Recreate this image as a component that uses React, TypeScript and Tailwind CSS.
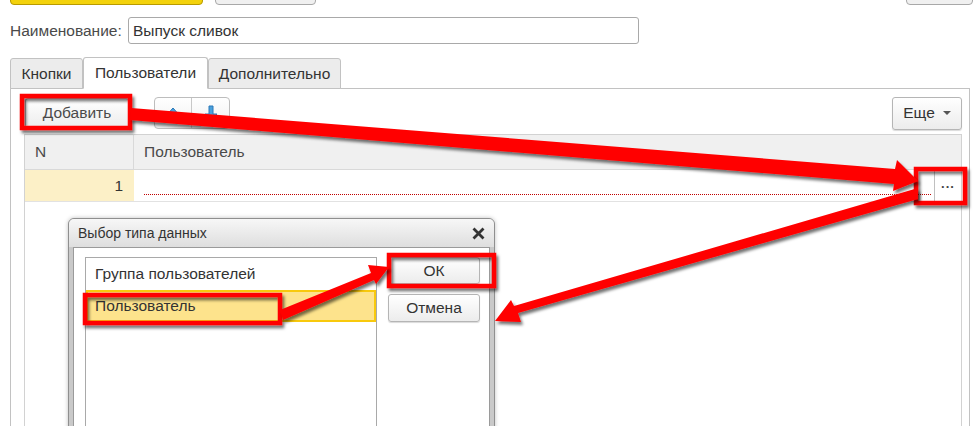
import React from "react";

const Btn = ({ children, className = "" }: { children?: React.ReactNode; className?: string }) => (
  <div
    className={`flex items-center justify-center rounded-[3px] border border-[#b5b5b5] bg-gradient-to-b from-white to-[#ececec] shadow-[0_1px_1px_rgba(0,0,0,0.15)] ${className}`}
  >
    {children}
  </div>
);

const Overlay = () => (
  <svg className="pointer-events-none absolute left-0 top-0" width={977} height={426}>
    <defs>
      <filter id="sh" x="-20%" y="-20%" width="140%" height="140%">
        <feDropShadow dx="2" dy="3" stdDeviation="1.6" floodColor="#000" floodOpacity="0.55" />
      </filter>
    </defs>
    <g filter="url(#sh)" fill="none" stroke="#ff0000" strokeWidth={4.5}>
      <rect x={22} y={96} width={108} height={32} />
      <rect x={916} y={169} width={49} height={34} />
      <rect x={389} y={255} width={105} height={31} />
      <rect x={85} y={295} width={195} height={28} />
    </g>
    <g filter="url(#sh)" fill="#ff0000">
      <polygon points="131,108 895,169 897,160 918,181 893,191 894,184 130,120" />
      <polygon points="918,188 918,199 518,313 521,322 495,321 511,300 514,306" />
      <polygon points="280,310 371,273 368,265 389,267 376,284 374,280 283,320" />
    </g>
  </svg>
);

export default function App() {
  return (
    <div className="relative h-[426px] w-[977px] overflow-hidden bg-white font-['Liberation_Sans',Arial,sans-serif] text-[15.5px] text-[#4a4a4a]">
      {/* top buttons cut off */}
      <div className="flex h-[5px] items-end overflow-hidden">
        <div className="ml-[10px] h-[20px] w-[193px] shrink-0 rounded-[4px] border border-[#b89a00] bg-[#f3d20c]" />
        <div className="ml-[12px] h-[20px] w-[101px] shrink-0 rounded-[4px] border border-[#a8a8a8] bg-[#f0f0f0]" />
        <div className="ml-auto mr-[4px] h-[20px] w-[67px] shrink-0 rounded-[4px] border border-[#a8a8a8] bg-[#f0f0f0]" />
      </div>

      {/* name row */}
      <div className="mt-[12px] flex items-center pl-[10px]">
        <div className="w-[118px]">Наименование:</div>
        <div className="flex h-[27px] w-[511px] items-center rounded-[3px] border border-[#a9a9a9] pl-[4px] text-[#333]">
          Выпуск сливок
        </div>
      </div>

      {/* tabs */}
      <div className="relative z-10 mt-[13px] -mb-px flex h-[32px] items-end pl-[10px] text-[#333]">
        <div className="flex h-[31px] w-[73px] items-center justify-center rounded-t-[3px] border border-[#c2c2c2] bg-[#ececec]">Кнопки</div>
        <div className="flex h-[32px] w-[125px] items-center justify-center rounded-t-[3px] border border-b-white border-[#c2c2c2] bg-white">Пользователи</div>
        <div className="flex h-[31px] w-[133px] items-center justify-center rounded-t-[3px] border border-[#c2c2c2] bg-[#ececec]">Дополнительно</div>
      </div>

      {/* panel */}
      <div className="ml-[10px] h-[400px] w-[960px] border border-[#c2c2c2] pl-[13px] pr-[6px] pt-[8px]">
        <div className="flex h-[32px] items-center">
          <Btn className="ml-[1px] h-[31px] w-[104px]">Добавить</Btn>
          <div className="ml-[25px] flex h-[32px] w-[76px] rounded-[4px] border border-[#bdbdbd] bg-gradient-to-b from-white to-[#f0f0f0]">
            <div className="flex w-[37px] items-center justify-center border-r border-[#c8c8c8]">
              <svg width="18" height="12" viewBox="0 0 18 12">
                <polygon points="9,1 17,10 1,10" fill="#4aa0dc" stroke="#2a78b8" strokeWidth="1" />
              </svg>
            </div>
            <div className="flex flex-1 items-center justify-center">
              <svg width="16" height="16" viewBox="0 0 16 16">
                <polygon points="6,1 10,1 10,9 14,9 8,15 2,9 6,9" fill="#4aa0dc" stroke="#2a78b8" strokeWidth="1" />
              </svg>
            </div>
          </div>
          <Btn className="ml-auto mr-[1px] h-[33px] w-[70px] gap-[8px] text-[#333]">
            <span>Еще</span>
            <span className="h-0 w-0 border-x-[4px] border-t-[4px] border-x-transparent border-t-[#555]" />
          </Btn>
        </div>

        {/* table */}
        <div className="mt-[5px] h-[400px] w-[938px] border-l border-r border-t border-[#d2d2d2]">
          <div className="flex h-[35px] items-center border-b border-[#d9d9d9] bg-[#f0f0f0]">
            <div className="flex h-full w-[109px] items-center border-r border-[#d9d9d9] pl-[10px]">N</div>
            <div className="pl-[10px]">Пользователь</div>
          </div>
          <div className="flex h-[32px] border-b border-[#e2e2e2]">
            <div className="flex w-[109px] items-center justify-end bg-[#fcf0c7] pr-[11px] text-[#333]">1</div>
            <div className="flex flex-1 items-end pb-[6px] pl-[10px] pr-[2px]">
              <div className="h-px flex-1 bg-[repeating-linear-gradient(to_right,#c00000_0_1px,transparent_1px_2px)]" />
            </div>
            <div className="flex w-[27px] items-center justify-center border-l border-[#c0c0c0] pb-[4px] text-[13px] font-bold tracking-[1px] text-[#444]">...</div>
          </div>
        </div>
      </div>

      {/* dialog */}
      <div className="absolute left-[68px] top-[218px] flex h-[260px] w-[427px] flex-col overflow-hidden rounded-t-[6px] border border-[#8f8f8f] bg-[#c9c9c9] shadow-[0_0_4px_rgba(0,0,0,0.25)]">
        <div className="flex h-[28px] shrink-0 items-center justify-between bg-gradient-to-b from-[#f7f7f7] to-[#dedede] pl-[9px] pr-[9px] text-[14px] text-[#333]">
          <span>Выбор типа данных</span>
          <svg width="13" height="13" viewBox="0 0 13 13">
            <path d="M1.5 1.5 L11.5 11.5 M11.5 1.5 L1.5 11.5" stroke="#333" strokeWidth="2.8" />
          </svg>
        </div>
        <div className="mx-[4px] flex min-h-0 flex-1 border border-[#9a9a9a] bg-white pl-[11px] pt-[9px]">
          <div className="h-[300px] w-[292px] shrink-0 border border-[#a9a9a9]">
            <div className="flex h-[32px] items-center pl-[9px] text-[#333]">Группа пользователей</div>
            <div className="flex h-[32px] items-center border-2 border-[#f8c90d] bg-[#fde38c] pl-[7px] text-[#333]">Пользователь</div>
          </div>
          <div className="ml-[11px] flex flex-col gap-[10px]">
            <Btn className="h-[27px] w-[92px] text-[#333]">ОК</Btn>
            <Btn className="h-[28px] w-[92px] text-[#333]">Отмена</Btn>
          </div>
        </div>
      </div>

      <Overlay />
    </div>
  );
}
